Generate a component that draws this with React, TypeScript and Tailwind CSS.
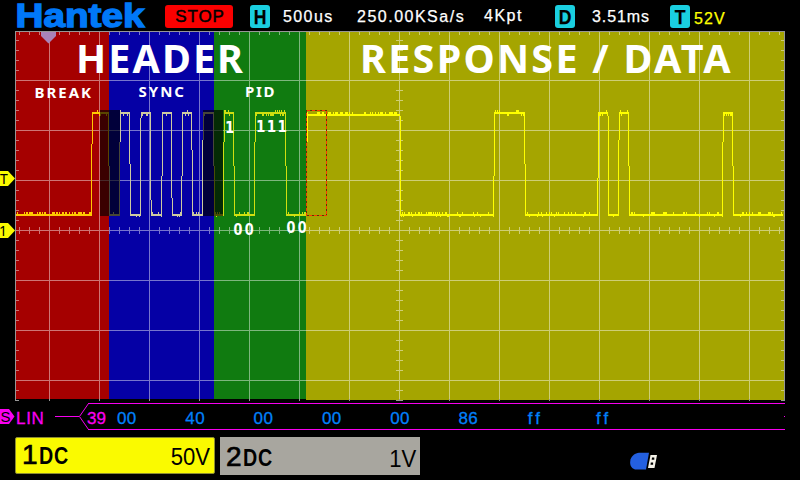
import React from "react";

const SANS = "font-['Liberation_Sans',Arial,sans-serif]";

const zones = [
  { from: 16, to: 109, bottom: 399, fill: "#a50000", trace: "#ffc800" },
  { from: 109, to: 214, bottom: 399, fill: "#0500a5", trace: "#cdcaa0" },
  { from: 214, to: 306, bottom: 399, fill: "#107b10", trace: "#cfdf10" },
  { from: 306, to: 784, bottom: 400, fill: "#a5a500", trace: "#ffff00" },
];

// Each entry: x where the level starts, level (1 = high), y at which the edge shifts one pixel.
const levels: [number, number, number][] = [
  [16, 0, 0], [92, 1, 144], [109, 0, 166], [120, 1, 142], [130, 0, 164], [141, 1, 118],
  [151, 0, 200], [162, 1, 176], [172, 0, 198], [182, 1, 176], [192, 0, 150], [203, 1, 140],
  [214, 0, 166], [224, 1, 142], [234, 0, 166], [255, 1, 142], [286, 0, 166], [307, 1, 142],
  [400, 0, 116], [494, 1, 176], [525, 0, 164], [598, 1, 178], [608, 0, 116], [619, 1, 140],
  [629, 0, 166], [723, 1, 142], [733, 0, 166], [783, 0, 0],
];

function buildTrace() {
  const paths = ["", "", "", ""];
  let seed = 7;
  const rnd = () => {
    seed = (seed * 1103515245 + 12345) % 2147483648;
    return seed / 2147483648;
  };
  const put = (x: number, y: number, h: number) => {
    const zone = x < 109 ? 0 : x < 214 ? 1 : x < 306 ? 2 : 3;
    paths[zone] += `M${x} ${y}h1v${h}h-1z`;
  };
  for (let i = 0; i < levels.length - 1; i++) {
    const [start, high, shift] = levels[i];
    const end = levels[i + 1][0];
    if (shift) {
      if (high) {
        put(start - 1, shift, 214 - shift);
        put(start, 114, shift - 114);
      } else {
        put(start - 1, 114, shift - 114);
        put(start, shift, 216 - shift);
      }
    }
    const long = high === 1 && start === 307;
    const noisy = start === 16 || long;
    const base = high ? (long ? 114 : 112) : 214;
    for (let x = start; x < end; x++) {
      put(x, base, 2);
      const r = rnd();
      if (r < (noisy ? 0.5 : high ? 0.1 : 0.2)) put(x, base - 2, 2);
      else if (r > (high ? 0.75 : 0.9) && !noisy) put(x, base + 2, high ? 2 : 1);
    }
  }
  return paths;
}

const tracePaths = buildTrace();

function buildGrid() {
  let d = "";
  for (let x = 49; x < 780; x += 50) d += `M${x} 32h1v368h-1z`;
  for (let y = 80; y < 400; y += 50) d += `M16 ${y}h768v1h-768z`;
  for (let x = 19; x < 784; x += 10) {
    if ((x - 49) % 50 === 0) continue;
    d += `M${x} 32h1v3h-1zM${x} 227h1v3h-1zM${x} 231h1v3h-1z`;
  }
  for (let y = 40; y < 400; y += 10) {
    if ((y - 80) % 50 === 0) continue;
    d += `M16 ${y}h3v1h-3zM781 ${y}h3v1h-3zM396 ${y}h3v1h-3zM400 ${y}h3v1h-3z`;
  }
  return d;
}

const gridPath = buildGrid();
const footTicks = Array.from({ length: 15 }, (_, i) => `M${49 + i * 50} 399h1v2h-1z`).join("");

function Marker({ y, children }: { y: number; children: React.ReactNode }) {
  return (
    <g>
      <path d={`M0 ${y - 7.5}H8L15 ${y}L8 ${y + 7.5}H0z`} fill="#fafa00" />
      <g fontSize="14" fontFamily="Noto Sans, sans-serif" fill="#000">{children}</g>
    </g>
  );
}

function Plot() {
  const sans = "Noto Sans, Open Sans, sans-serif";
  const digits = "DejaVu Sans Condensed, DejaVu Sans, sans-serif";
  return (
    <svg className="block shrink-0" width="800" height="371" viewBox="0 31 800 371">
      <g shapeRendering="crispEdges">
        {zones.map((z) => (
          <rect key={z.from} x={z.from} y="32" width={z.to - z.from} height={z.bottom - 32} fill={z.fill} />
        ))}
        <path d={gridPath} fill="#fff" fillOpacity="0.46" />
        <path d={footTicks + "M15 400h4v1h-4zM396 400h7v1h-7zM781 400h4v1h-4z"} fill="#999" />
        <path d="M15 31h770v1h-770zM15 31h1v370h-1zM784 31h1v370h-1z" fill="#969696" />
        {tracePaths.map((d, i) => (
          <path key={i} d={d} fill={zones[i].trace} />
        ))}
        <rect x="100" y="110" width="20" height="106" fill="#000" fillOpacity="0.65" />
        <rect x="203" y="110" width="20" height="106" fill="#000" fillOpacity="0.65" />
        <rect x="306.5" y="110.5" width="20" height="105" fill="none" stroke="#5a3c00" />
        <rect x="306.5" y="110.5" width="20" height="105" fill="none" stroke="#ff3800" strokeDasharray="3 2" />
      </g>
      <path d="M41 32H56V36L48.5 43.5L41 36z" fill="#a983b7" />
      <Marker y={178.5}><text x="0" y="183.5">T</text></Marker>
      <Marker y={230.5}><text x="-1" y="235.5">1</text></Marker>
      <g fill="#fff" fontWeight="700" fontFamily={sans}>
        <text x="76" y="73" fontSize="39.5" textLength="167">HEADER</text>
        <text x="360" y="73" fontSize="39.5" textLength="370.5">RESPONSE / DATA</text>
        <text x="34.5" y="98" fontSize="15" textLength="56.5">BREAK</text>
        <text x="138.5" y="97" fontSize="15" textLength="45.5">SYNC</text>
        <text x="245" y="97" fontSize="15" textLength="29.5">PID</text>
        <text x="233.5" y="235" fontSize="15.5" textLength="20">00</text>
        <text x="286.5" y="233" fontSize="15.5" textLength="20">00</text>
      </g>
      <g fill="#fff" fontWeight="700" fontFamily={digits} fontSize="15">
        <text x="225" y="133">1</text>
        <text x="256" y="132" textLength="31">111</text>
      </g>
    </svg>
  );
}

function Badge({ children }: { children: string }) {
  return (
    <span className="flex h-[23px] w-5 shrink-0 items-center justify-center rounded-[3px] bg-[#1acfe0] text-black">
      <span className="scale-x-[0.88] text-[20px] leading-none font-bold">{children}</span>
    </span>
  );
}

function TopBar() {
  return (
    <header className="flex h-[31px] shrink-0 items-start pt-[5px] text-[16px] leading-[24px] whitespace-nowrap text-white [-webkit-text-stroke:0.25px]">
      <svg className="-mt-[5px] ml-[14px] shrink-0 overflow-visible" width="134" height="31" viewBox="14 0 134 31">
        <text x="15.5" y="27" fontSize="34" fontWeight="700" fontFamily="Liberation Sans, Arial, sans-serif" fill="#0078f8" stroke="#0078f8" strokeWidth="1.4" textLength="129" lengthAdjust="spacingAndGlyphs">Hantek</text>
      </svg>
      <span className="ml-[17px] flex h-[23px] w-[68px] shrink-0 items-center justify-center rounded-[3px] bg-[#fa0000] pl-0.5 text-[17px] tracking-[0.9px] text-black [-webkit-text-stroke:0.5px_black]">STOP</span>
      <span className="ml-[17px]"><Badge>H</Badge></span>
      <span className="ml-[13px] w-[74px] shrink-0 tracking-[1.4px]">500us</span>
      <span className="w-[127px] shrink-0 tracking-[1.5px]">250.00KSa/s</span>
      <span className="-mt-px w-[71px] shrink-0 tracking-[1.5px]">4Kpt</span>
      <Badge>D</Badge>
      <span className="ml-[17px] w-[78px] shrink-0 tracking-[0.9px]">3.51ms</span>
      <Badge>T</Badge>
      <span className="ml-1 mt-0.5 tracking-[1.1px] text-[#ffff00]">52V</span>
    </header>
  );
}

const bytes = ["00", "40", "00", "00", "00", "86", "ff", "ff"];

function DecodeRow() {
  return (
    <section className="relative h-[35px] shrink-0 text-[17px] leading-[34px] whitespace-nowrap">
      <svg className="absolute inset-0" width="800" height="35" viewBox="0 402 800 35">
        <g shapeRendering="crispEdges" fill="#f600ee">
          <path d="M88 403h697v1h-697zM88 429h697v1h-697zM55 416h24v1h-24zM784 416h1v1h-1z" />
        </g>
        <path d="M88.5 403.5L79.5 416.5L88.5 429.5" fill="none" stroke="#f600ee" />
        <path d="M0 409H9L14.5 416.5L9 424H0z" fill="#fa00f0" />
        <text x="0.5" y="422" fontSize="15" fontFamily="Liberation Sans, Arial, sans-serif">S</text>
      </svg>
      <div className="relative flex">
        <span className="ml-4 w-[71px] shrink-0 tracking-[0.7px] text-[#fa00f0] [-webkit-text-stroke:0.3px_#fa00f0]">LIN</span>
        <span className="w-[30px] shrink-0 text-[#fa00f0] [-webkit-text-stroke:0.3px_#fa00f0]">39</span>
        {bytes.map((b, i) => (
          <span
            key={i}
            className={"w-[68.3px] shrink-0 text-[#0080fa] [-webkit-text-stroke:0.3px_#0080fa] " + (b === "ff" ? "pl-px tracking-[3px]" : "tracking-[0.4px]")}
          >
            {b}
          </span>
        ))}
      </div>
    </section>
  );
}

function Channel({ n, volts, tone }: { n: string; volts: string; tone: string }) {
  return (
    <div className={"flex items-end justify-between pl-1.5 pr-1 text-black " + tone}>
      <div className="flex items-baseline leading-[35px]">
        <span className="w-[17px] text-[28px] [-webkit-text-stroke:0.7px_black]">{n}</span>
        <span className="origin-left scale-x-[0.82] text-[24px] font-bold tracking-[1px]">DC</span>
      </div>
      <span className="origin-right scale-x-[0.96] text-[23px] leading-[31px]">{volts}</span>
    </div>
  );
}

export default function App() {
  return (
    <main className={"flex h-[480px] w-[800px] flex-col overflow-hidden bg-black " + SANS}>
      <TopBar />
      <Plot />
      <DecodeRow />
      <footer className="flex h-[38px] shrink-0 gap-[5px] pl-[15px]">
        <Channel n="1" volts="50V" tone="h-[37px] w-[200px] rounded-[2px] bg-[#fafa00] border border-[#8c8c30]" />
        <Channel n="2" volts="1V" tone="h-[38px] w-[200px] bg-[#a8a69f]" />
        <svg className="mt-[15px] ml-[204px]" width="30" height="19" viewBox="629 452 30 19">
          <path d="M639 452.7H649L646 469.5H635C630.5 468 629.5 464 630.5 459.5C632 455.5 635 453 639 452.7z" fill="#2460e0" />
          <path d="M650.5 455H657L654.5 468H648z" fill="#f5f2e8" />
          <path d="M652 457.5h2.3v2.3H651.7zM650.8 462.5h2.3v2.3H650.5z" fill="#000" />
        </svg>
      </footer>
    </main>
  );
}
